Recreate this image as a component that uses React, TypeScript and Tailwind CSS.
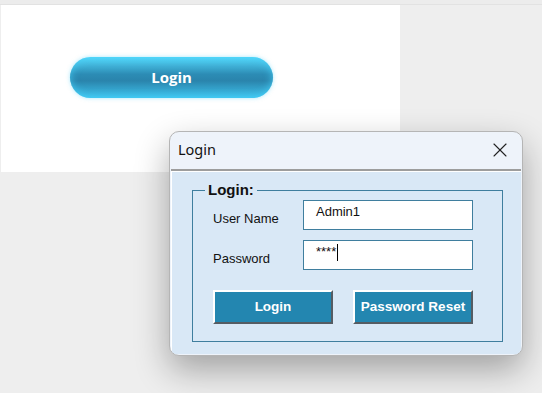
import { X } from "lucide-react";

const sans = "font-['Liberation_Sans',Arial,sans-serif]";

function FieldRow({ label, value, caret }: { label: string; value: string; caret?: boolean }) {
  return (
    <div className="flex items-center">
      <span className={`w-[90px] pt-[7px] text-[13px] text-[#111] ${sans}`}>{label}</span>
      <div className="flex h-[30px] w-[170px] items-start border border-[#3f7e9e] bg-white px-[12px] pt-[3px]">
        <span className={`text-[13px] leading-[16px] text-[#111] ${sans}`}>{value}</span>
        {caret ? <span className="ml-[1px] h-[17px] w-[1px] bg-black" /> : null}
      </div>
    </div>
  );
}

function BevelButton({ children }: { children: React.ReactNode }) {
  return (
    <button
      className={`h-[34px] w-[120px] border-2 border-t-white border-l-white border-r-[#555c63] border-b-[#555c63] bg-[#2386b0] text-[13.5px] font-bold text-white ${sans}`}
    >
      {children}
    </button>
  );
}

export default function App() {
  return (
    <div className="relative h-[393px] w-[542px] overflow-hidden bg-[#eeeeee]">
      <div className="h-[5px] border-b border-[#e2e2e2] bg-[#ececec]" />
      <div className="ml-[1px] h-[167px] w-[399px] bg-white pl-[69px] pt-[52px]">
        <button className="h-[41px] w-[203px] rounded-full bg-[linear-gradient(to_bottom,#55d8fb,#2c8cb5_42%,#2a84ac_58%,#3fc4ee)] shadow-[0_0_4px_rgba(80,210,250,0.5),inset_0_0_8px_rgba(70,210,250,0.8)] font-['Open_Sans',sans-serif] text-[15px] font-bold text-white">
          Login
        </button>
      </div>

      <div className="absolute left-[169px] top-[131px] flex h-[225px] w-[354px] flex-col overflow-hidden rounded-[10px] border border-[#b5b5b5] bg-[#eef3fa] shadow-[0_14px_34px_rgba(0,0,0,0.32)]">
        <div className="flex h-[37px] shrink-0 items-center justify-between pb-[2px] pl-[8px] pr-[10px]">
          <span className="font-['Noto_Sans',sans-serif] text-[14.5px] text-[#111]">Login</span>
          <X className="h-[24px] w-[24px] text-[#222]" strokeWidth={1.1} />
        </div>
        <div className="mx-[1px] mb-[1px] flex-1 border-t-2 border-[#9d9d9d] bg-[#d9e8f6] px-[21px] pt-[10px] shadow-[inset_1px_1px_0_#ffffff]">
          <fieldset className="h-[161px] border border-[#3f7e9e]">
            <legend className={`ml-[12px] px-[3px] text-[15px] font-bold leading-[18px] text-[#111] ${sans}`}>Login:</legend>
            <div className="pl-[20px] pr-[29px]">
              <div className="flex flex-col gap-[10px] pt-[1px]">
                <FieldRow label="User Name" value="Admin1" />
                <FieldRow label="Password" value="****" caret />
              </div>
              <div className="mt-[20px] flex justify-between">
                <BevelButton>Login</BevelButton>
                <BevelButton>Password Reset</BevelButton>
              </div>
            </div>
          </fieldset>
        </div>
      </div>
    </div>
  );
}
